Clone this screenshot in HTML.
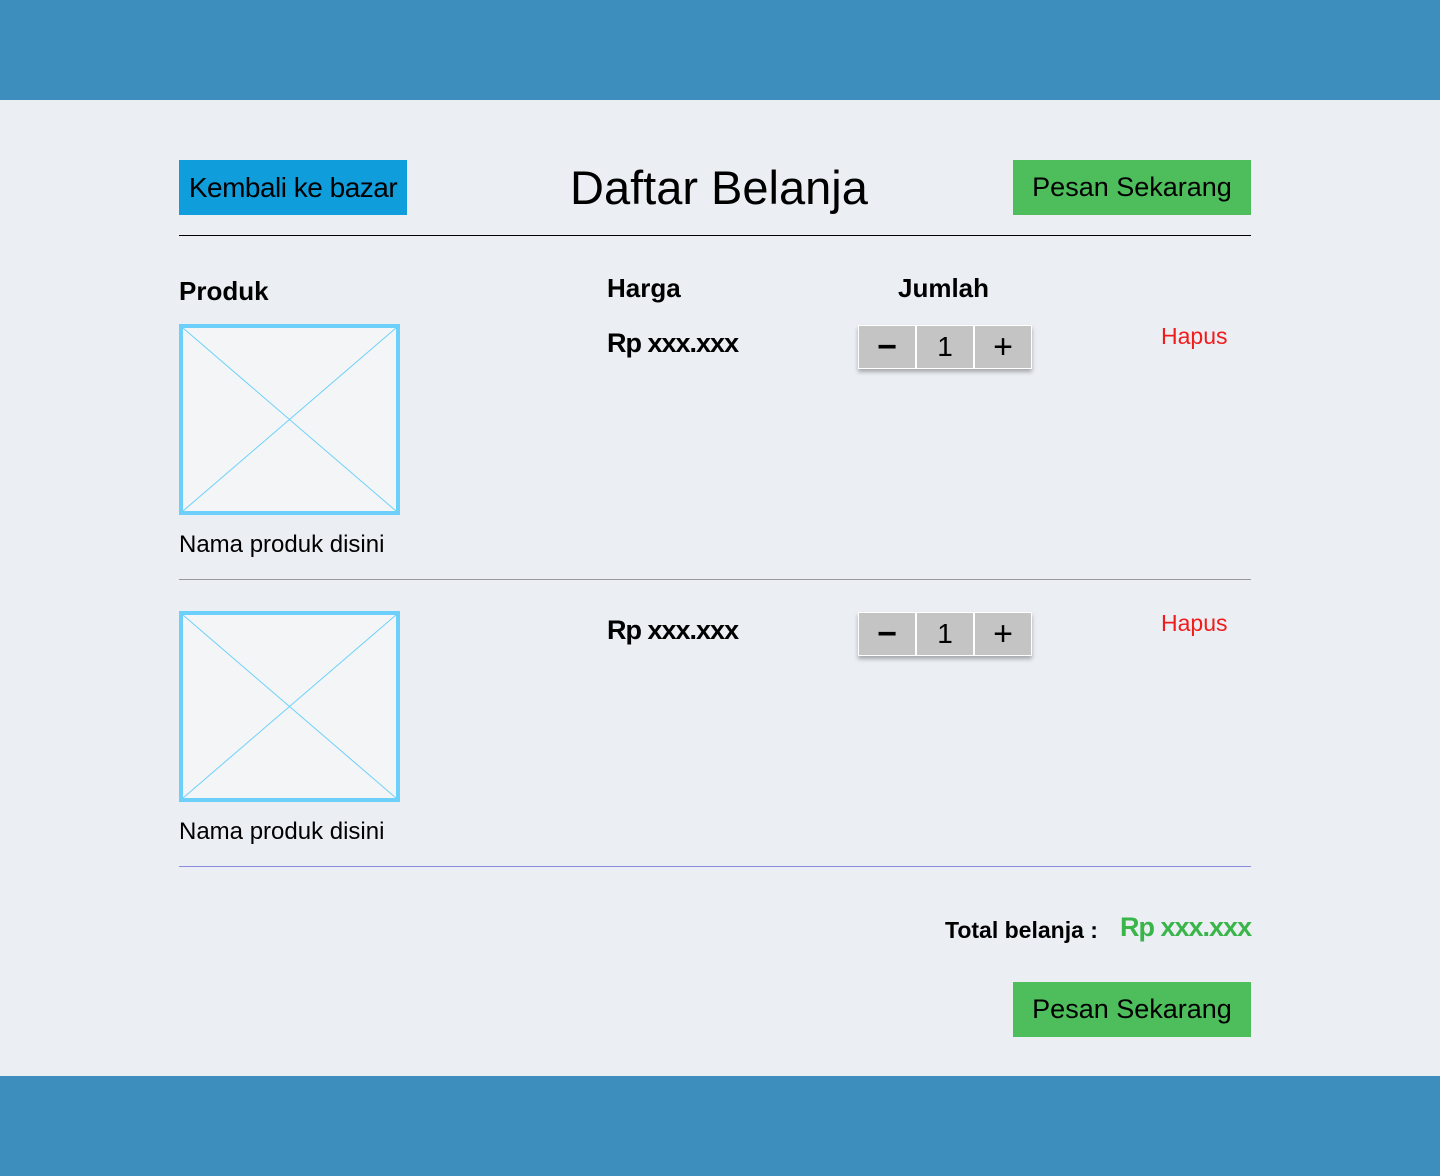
<!DOCTYPE html>
<html><head><style>
*{margin:0;padding:0;box-sizing:border-box}
body{width:1440px;height:1176px;background:#ebeff4;font-family:"Liberation Sans",sans-serif;position:relative;overflow:hidden;color:#000}
.a{position:absolute;white-space:nowrap}
.bar{position:absolute;left:0;width:1440px;height:100px;background:#3d8dbd}
.btn{position:absolute;display:flex;align-items:center;justify-content:center;font-size:27px}
.img{position:absolute;width:221px;height:191px;border:4px solid #6dd0fb;background:#f3f5f7}
.step{position:absolute;width:174px;height:44px;display:flex;box-shadow:0 3px 4px rgba(0,0,0,.3);background:#fff}
.step div{flex:1;background:#c4c4c4;margin:1px;display:flex;align-items:center;justify-content:center;font-size:28px}
.price{font-size:27px;font-weight:bold;letter-spacing:-1px}
.hapus{color:#f21b1b;font-size:23px}
.h{font-size:26px;font-weight:bold}
</style></head><body>
<div class="bar" style="top:0"></div>
<div class="bar" style="top:1076px"></div>
<div class="btn" style="left:179px;top:160px;width:228px;height:55px;background:#0f9ddb;font-size:28px;letter-spacing:-0.5px">Kembali ke bazar</div>
<div class="a" style="left:570px;top:160px;font-size:47px">Daftar Belanja</div>
<div class="btn" style="left:1013px;top:160px;width:238px;height:55px;background:#4ebd5b">Pesan Sekarang</div>
<div class="a" style="left:179px;top:235px;width:1072px;height:1px;background:#000"></div>
<div class="a h" style="left:179px;top:276px">Produk</div>
<div class="a h" style="left:607px;top:273px">Harga</div>
<div class="a h" style="left:898px;top:273px">Jumlah</div>

<div class="img" style="left:179px;top:324px"><svg width="213" height="183" style="display:block"><line x1="0" y1="0" x2="213" y2="183" stroke="#6dd0fb"/><line x1="213" y1="0" x2="0" y2="183" stroke="#6dd0fb"/></svg></div>
<div class="a price" style="left:607px;top:328px">Rp xxx.xxx</div>
<div class="step" style="left:858px;top:325px"><div style="font-size:34px;font-weight:bold">−</div><div>1</div><div style="font-size:34px">+</div></div>
<div class="a hapus" style="left:1161px;top:323px">Hapus</div>
<div class="a" style="left:179px;top:531px;font-size:24px">Nama produk disini</div>
<div class="a" style="left:179px;top:579px;width:1072px;height:1px;background:#999"></div>

<div class="img" style="left:179px;top:611px"><svg width="213" height="183" style="display:block"><line x1="0" y1="0" x2="213" y2="183" stroke="#6dd0fb"/><line x1="213" y1="0" x2="0" y2="183" stroke="#6dd0fb"/></svg></div>
<div class="a price" style="left:607px;top:615px">Rp xxx.xxx</div>
<div class="step" style="left:858px;top:612px"><div style="font-size:34px;font-weight:bold">−</div><div>1</div><div style="font-size:34px">+</div></div>
<div class="a hapus" style="left:1161px;top:610px">Hapus</div>
<div class="a" style="left:179px;top:818px;font-size:24px">Nama produk disini</div>
<div class="a" style="left:179px;top:866px;width:1072px;height:1px;background:#8a8ae0"></div>

<div class="a" style="left:945px;top:917px;font-size:23px;font-weight:bold">Total belanja :</div>
<div class="a price" style="left:1120px;top:912px;color:#3ab54a">Rp xxx.xxx</div>
<div class="btn" style="left:1013px;top:982px;width:238px;height:55px;background:#4ebd5b">Pesan Sekarang</div>
</body></html>
